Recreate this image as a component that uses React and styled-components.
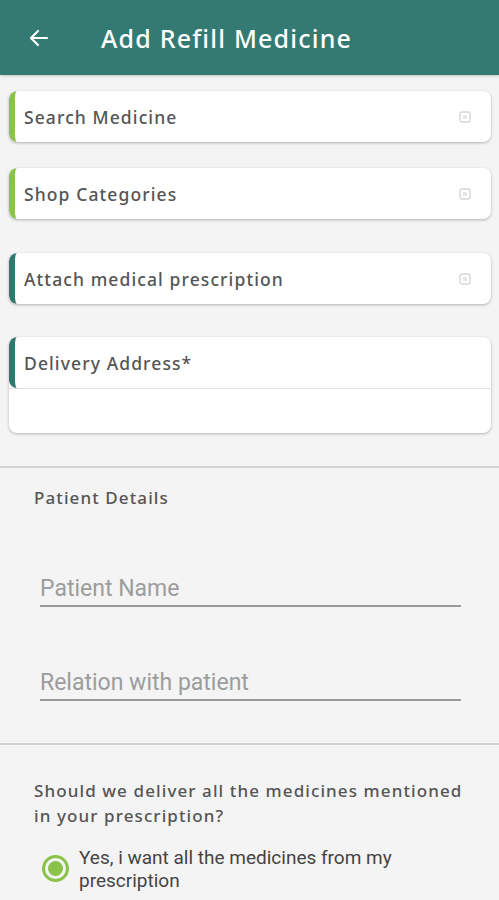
import React from "react";
import styled, { createGlobalStyle } from "styled-components";

const GlobalStyle = createGlobalStyle`
  html, body {
    margin: 0;
    padding: 0;
    background: #f4f4f4;
  }
  * {
    box-sizing: border-box;
  }
`;

const Page = styled.div`
  width: 499px;
  min-height: 900px;
  background: #f4f4f4;
  font-family: "Noto Sans", sans-serif;
  overflow: hidden;
`;

const Header = styled.header`
  height: 75px;
  background: #327a72;
  display: flex;
  align-items: center;
  padding: 0 0 0 27px;
  box-shadow: 0 1px 3px rgba(0, 0, 0, 0.2);
`;

const BackButton = styled.div`
  width: 24px;
  height: 24px;
  display: flex;
  align-items: center;
  margin-right: 50px;
`;

const Title = styled.h1`
  margin: 0;
  color: #ffffff;
  font-size: 25px;
  font-weight: 500;
  letter-spacing: 1.2px;
`;

const Cards = styled.div`
  padding: 16px 8px 0 9px;
  display: flex;
  flex-direction: column;
`;

const Card = styled.div`
  background: #ffffff;
  border-radius: 8px;
  box-shadow: 0 1px 3px rgba(0, 0, 0, 0.28);
  overflow: hidden;
  margin-bottom: ${(p) => p.gap || 0}px;
`;

const CardRow = styled.div`
  height: 51px;
  display: flex;
  align-items: center;
  justify-content: space-between;
  padding: 0 20px 0 9px;
  border-left: 6px solid ${(p) => p.accent};
  border-radius: 8px 0 0 8px;
`;

const CardLabel = styled.span`
  font-size: 17.5px;
  font-weight: 500;
  color: #555555;
  letter-spacing: 1.1px;
`;

const CardBody = styled.div`
  height: 45px;
  border-top: 1px solid #e2e2e2;
`;

const Divider = styled.div`
  height: 2px;
  background: #d2d2d2;
`;

const Section = styled.section`
  padding: ${(p) => p.pad};
`;

const SectionTitle = styled.div`
  font-size: 17px;
  font-weight: 500;
  color: #555555;
  letter-spacing: 1.1px;
  padding-left: 34px;
`;

const Field = styled.div`
  margin: 0 38px 0 40px;
  padding-bottom: 3px;
  border-bottom: 2px solid #9a9a9a;
  margin-top: ${(p) => p.top}px;
`;

const FieldInput = styled.input`
  width: 100%;
  border: none;
  background: transparent;
  outline: none;
  padding: 0;
  font-family: Roboto, sans-serif;
  font-size: 23px;
  color: #333;
  &::placeholder {
    color: #9c9c9c;
  }
`;

const Question = styled.div`
  font-size: 17px;
  font-weight: 500;
  line-height: 25px;
  color: #555555;
  letter-spacing: 1.1px;
  padding-left: 34px;
  padding-right: 20px;
`;

const RadioRow = styled.label`
  display: flex;
  align-items: flex-start;
  margin-top: 18px;
  padding-left: 42px;
`;

const RadioCircle = styled.span`
  flex: none;
  width: 27px;
  height: 27px;
  border-radius: 50%;
  border: 3px solid #8bc34a;
  display: flex;
  align-items: center;
  justify-content: center;
  margin-top: 9px;
  margin-right: 10px;
  &::after {
    content: "";
    width: 15px;
    height: 15px;
    border-radius: 50%;
    background: #8bc34a;
  }
`;

const RadioText = styled.span`
  font-family: Roboto, sans-serif;
  font-size: 19px;
  line-height: 23px;
  color: #444444;
  width: 340px;
`;

const AttachIcon = () => (
  <svg width="12" height="12" viewBox="0 0 12 12">
    <rect x="1" y="1" width="10" height="10" rx="2" fill="none" stroke="#d6d6d6" strokeWidth="1.4" />
    <rect x="4" y="4" width="4" height="4" fill="#e6e6e6" />
  </svg>
);

const BackArrow = () => (
  <svg width="24" height="24" viewBox="0 0 24 24">
    <path
      d="M20 12H5M11 5l-7 7 7 7"
      fill="none"
      stroke="#ffffff"
      strokeWidth="2.2"
      strokeLinecap="round"
      strokeLinejoin="round"
    />
  </svg>
);

const rows = [
  { label: "Search Medicine", accent: "#8bc34a", gap: 26 },
  { label: "Shop Categories", accent: "#8bc34a", gap: 34 },
  { label: "Attach medical prescription", accent: "#2f7a70", gap: 33 },
];

const App = () => {
  return (
    <Page>
      <GlobalStyle />
      <Header>
        <BackButton>
          <BackArrow />
        </BackButton>
        <Title>Add Refill Medicine</Title>
      </Header>
      <Cards>
        {rows.map((r) => (
          <Card key={r.label} gap={r.gap}>
            <CardRow accent={r.accent}>
              <CardLabel>{r.label}</CardLabel>
              <AttachIcon />
            </CardRow>
          </Card>
        ))}
        <Card>
          <CardRow accent="#2f7a70">
            <CardLabel>Delivery Address*</CardLabel>
          </CardRow>
          <CardBody />
        </Card>
      </Cards>
      <Section pad="33px 0 0 0">
        <Divider />
      </Section>
      <Section pad="18px 0 42px 0">
        <SectionTitle>Patient Details</SectionTitle>
        <Field top={66}>
          <FieldInput placeholder="Patient Name" />
        </Field>
        <Field top={62}>
          <FieldInput placeholder="Relation with patient" />
        </Field>
      </Section>
      <Divider />
      <Section pad="33px 0 0 0">
        <Question>
          Should we deliver all the medicines mentioned in your prescription?
        </Question>
        <RadioRow>
          <RadioCircle />
          <RadioText>Yes, i want all the medicines from my prescription</RadioText>
        </RadioRow>
      </Section>
    </Page>
  );
};

export default App;
